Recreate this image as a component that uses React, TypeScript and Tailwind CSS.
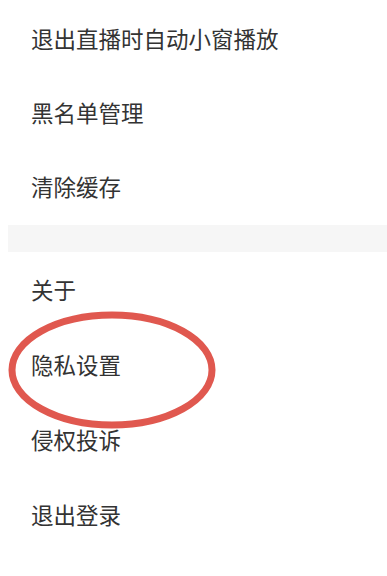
import React from 'react';

const topItems = ['退出直播时自动小窗播放', '黑名单管理', '清除缓存'];
const bottomItems = ['关于', '隐私设置', '侵权投诉', '退出登录'];

function Row({ label, h }: { label: string; h: string }) {
  return (
    <div className={`flex items-center pl-[31px] pb-1 ${h}`}>
      <span className="text-[22.5px] leading-none text-[#333333]">{label}</span>
    </div>
  );
}

export default function App() {
  return (
    <div
      className="relative w-[387px] h-[576px] bg-white overflow-hidden"
      style={{ fontFamily: '"Noto Sans CJK SC", "Noto Sans", sans-serif' }}
    >
      <div className="pt-[3px]">
        {topItems.map((item) => (
          <Row key={item} label={item} h="h-[74px]" />
        ))}
      </div>

      <div className="ml-2 h-[27px] bg-[#f6f6f6]" />

      <div className="pt-[2px]">
        {bottomItems.map((item) => (
          <Row key={item} label={item} h="h-[75px]" />
        ))}
      </div>

      {/* red annotation circle */}
      <svg
        className="absolute left-[6px] top-[309px] pointer-events-none"
        width="212"
        height="122"
        viewBox="0 0 212 122"
      >
        <ellipse
          cx="106"
          cy="61"
          rx="100"
          ry="55"
          fill="none"
          stroke="#e0584f"
          strokeWidth="7"
        />
      </svg>
    </div>
  );
}
